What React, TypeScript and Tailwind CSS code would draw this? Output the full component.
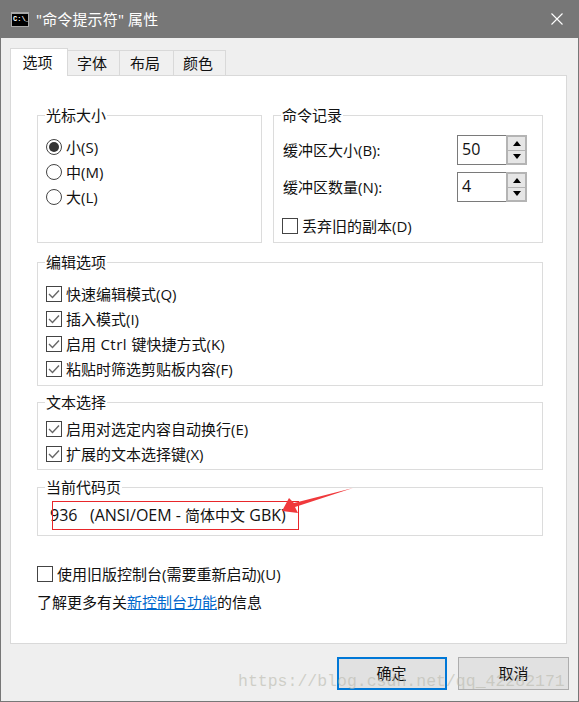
import type { ReactNode } from 'react';

const font = 'font-["Open_Sans","Noto_Sans_CJK_SC",sans-serif]';

function Group({ title, className, children }: { title: string; className: string; children: ReactNode }) {
  return (
    <div className={`relative border border-[#dcdcdc] ${className}`}>
      <span className="absolute left-[7px] top-[-12px] bg-white px-px text-[15px] leading-[22px] text-[#111]">{title}</span>
      {children}
    </div>
  );
}

function Radio({ label, checked }: { label: string; checked?: boolean }) {
  return (
    <div className="flex h-[25px] items-center gap-[4px]">
      <span className="flex h-[16px] w-[16px] items-center justify-center rounded-full border border-[#444] bg-white">
        {checked && <span className="h-[10px] w-[10px] rounded-full bg-[#333]" />}
      </span>
      <span className="text-[15px] leading-[22px] text-[#111]">{label}</span>
    </div>
  );
}

function Check({ label, checked = true }: { label: ReactNode; checked?: boolean }) {
  return (
    <div className="flex h-[25px] items-center gap-[4px]">
      <span className="flex h-[16px] w-[16px] items-center justify-center border border-[#444] bg-white">
        {checked && (
          <svg width="12" height="10" viewBox="0 0 12 10" fill="none">
            <path d="M1 5 L4.5 8.5 L11 1.5" stroke="#666" strokeWidth="1.4" />
          </svg>
        )}
      </span>
      <span className="whitespace-pre text-[15px] leading-[22px] text-[#111]">{label}</span>
    </div>
  );
}

function Spinner({ label, value }: { label: string; value: string }) {
  return (
    <div className="flex h-[30px] items-center justify-between">
      <span className="text-[15px] leading-[22px] text-[#111]">{label}</span>
      <div className="flex h-[30px] w-[70px]">
        <div className="flex h-full w-[49px] items-center border border-r-0 border-[#7a7a7a] pb-[3px] pl-1 text-[16px] text-[#111]">{value}</div>
        <div className="flex h-full w-[21px] flex-col gap-px border-2 border-[#b4b4b4] bg-[#b4b4b4]">
          <div className="flex flex-1 items-center justify-center bg-[#e6e6e6]">
            <span className="h-0 w-0 border-x-[4px] border-b-[5px] border-x-transparent border-b-black" />
          </div>
          <div className="flex flex-1 items-center justify-center bg-[#e6e6e6]">
            <span className="h-0 w-0 border-x-[4px] border-t-[5px] border-x-transparent border-t-black" />
          </div>
        </div>
      </div>
    </div>
  );
}

function Tab({ label, w }: { label: string; w: string }) {
  return (
    <div className={`flex h-[25px] items-center justify-center border border-b-0 border-l-0 border-[#d9d9d9] bg-[#f0f0f0] pr-[3px] text-[15px] text-[#111] ${w}`}>
      {label}
    </div>
  );
}

export default function App() {
  return (
    <div className={`relative flex h-[702px] w-[579px] flex-col overflow-hidden border-x border-b border-[#777] bg-[#efefef] ${font}`}>
      <div className="-mx-px flex h-[38px] shrink-0 items-center bg-[#777777] pl-[11px] pr-[16px] text-white">
        <div className="flex h-[15px] w-[18px] items-center overflow-hidden border border-[#aaa] border-t-[2px] bg-black pl-px font-['Liberation_Mono',monospace] text-[7px] font-bold leading-none text-white">
          C:\_
        </div>
        <span className="ml-[7px] text-[15px] leading-none tracking-[0.15px]">"命令提示符" 属性</span>
        <svg className="ml-auto" width="12" height="12" viewBox="0 0 12 12" fill="none">
          <path d="M0.5 0.5 L11.5 11.5 M11.5 0.5 L0.5 11.5" stroke="white" strokeWidth="1.1" />
        </svg>
      </div>

      <div className="flex flex-1 flex-col px-[9px]">
        <div className="flex h-[37px] items-end">
          <div className="relative z-10 -mb-px flex h-[28px] w-[58px] items-center justify-center border border-b-0 border-[#d9d9d9] bg-white pr-[3px] text-[15px] text-[#111]">
            选项
          </div>
          <Tab label="字体" w="w-[52px]" />
          <Tab label="布局" w="w-[54px]" />
          <Tab label="颜色" w="w-[52px]" />
        </div>

        <div className="flex h-[569px] w-[557px] flex-col border border-[#d9d9d9] bg-white pl-[26px] pr-[23px] pt-[39px]">
          <div className="flex gap-[11px]">
            <Group title="光标大小" className="h-[128px] w-[225px] px-[8px] pt-[18px]">
              <Radio label="小(S)" checked />
              <Radio label="中(M)" />
              <Radio label="大(L)" />
            </Group>
            <Group title="命令记录" className="h-[128px] w-[270px] pl-[9px] pr-[15px] pt-[19px]">
              <div className="flex flex-col gap-[7px]">
                <Spinner label="缓冲区大小(B):" value="50" />
                <Spinner label="缓冲区数量(N):" value="4" />
              </div>
              <div className="-ml-px mt-[11px]">
                <Check label="丢弃旧的副本(D)" checked={false} />
              </div>
            </Group>
          </div>

          <Group title="编辑选项" className="mt-[19px] h-[124px] px-[8px] pt-[18px]">
            <Check label="快速编辑模式(Q)" />
            <Check label="插入模式(I)" />
            <Check label={<>启用<span className="tracking-[0.5px]"> Ctrl </span>键快捷方式(K)</>} />
            <Check label="粘贴时筛选剪贴板内容(F)" />
          </Group>

          <Group title="文本选择" className="mt-[16px] h-[68px] px-[8px] pt-[13px]">
            <Check label="启用对选定内容自动换行(E)" />
            <Check label="扩展的文本选择键(X)" />
          </Group>

          <Group title="当前代码页" className="mt-[17px] h-[49px] pl-[12px] pt-[15px]">
            <span className="whitespace-pre text-[15px] leading-[22px] text-[#111]">
              <span className="text-[16px]">936   (ANSI/OEM - </span>简体中文<span className="text-[16px]"> GBK)</span>
            </span>
          </Group>

          <div className="mt-[25px]">
            <Check label="使用旧版控制台(需要重新启动)(U)" checked={false} />
          </div>
          <p className="mt-[5px] text-[15px] leading-[22px] text-[#111]">
            了解更多有关<span className="text-[#0066cc] underline">新控制台功能</span>的信息
          </p>
        </div>

        <div className="mt-[13px] flex justify-end gap-[11px]">
          <button className="h-[33px] w-[110px] border-2 border-[#0078d7] bg-[#e1e1e1] pr-px text-[15px] text-[#111]">确定</button>
          <button className="h-[33px] w-[111px] border border-[#adadad] bg-[#e1e1e1] text-[15px] text-[#111]">取消</button>
        </div>
      </div>

      {/* red annotation drawn over the code page row */}
      <svg className="pointer-events-none absolute left-[-1px] top-0" width="579" height="702" viewBox="0 0 579 702" fill="none">
        <rect x="52.5" y="501.5" width="246" height="28" stroke="#e8262a" strokeWidth="1" />
        <path d="M353 488 L294 503 L289 498 L282 511 L298 513 L295 507 Z" fill="#f0393c" />
      </svg>

      {/* blog watermark */}
      <span className="pointer-events-none absolute left-[237px] top-[674px] whitespace-nowrap font-['Liberation_Mono',monospace] text-[16.5px] leading-none text-[#b9b9ad]/60">
        https://blog.csdn.net/qq_42282171
      </span>
    </div>
  );
}
